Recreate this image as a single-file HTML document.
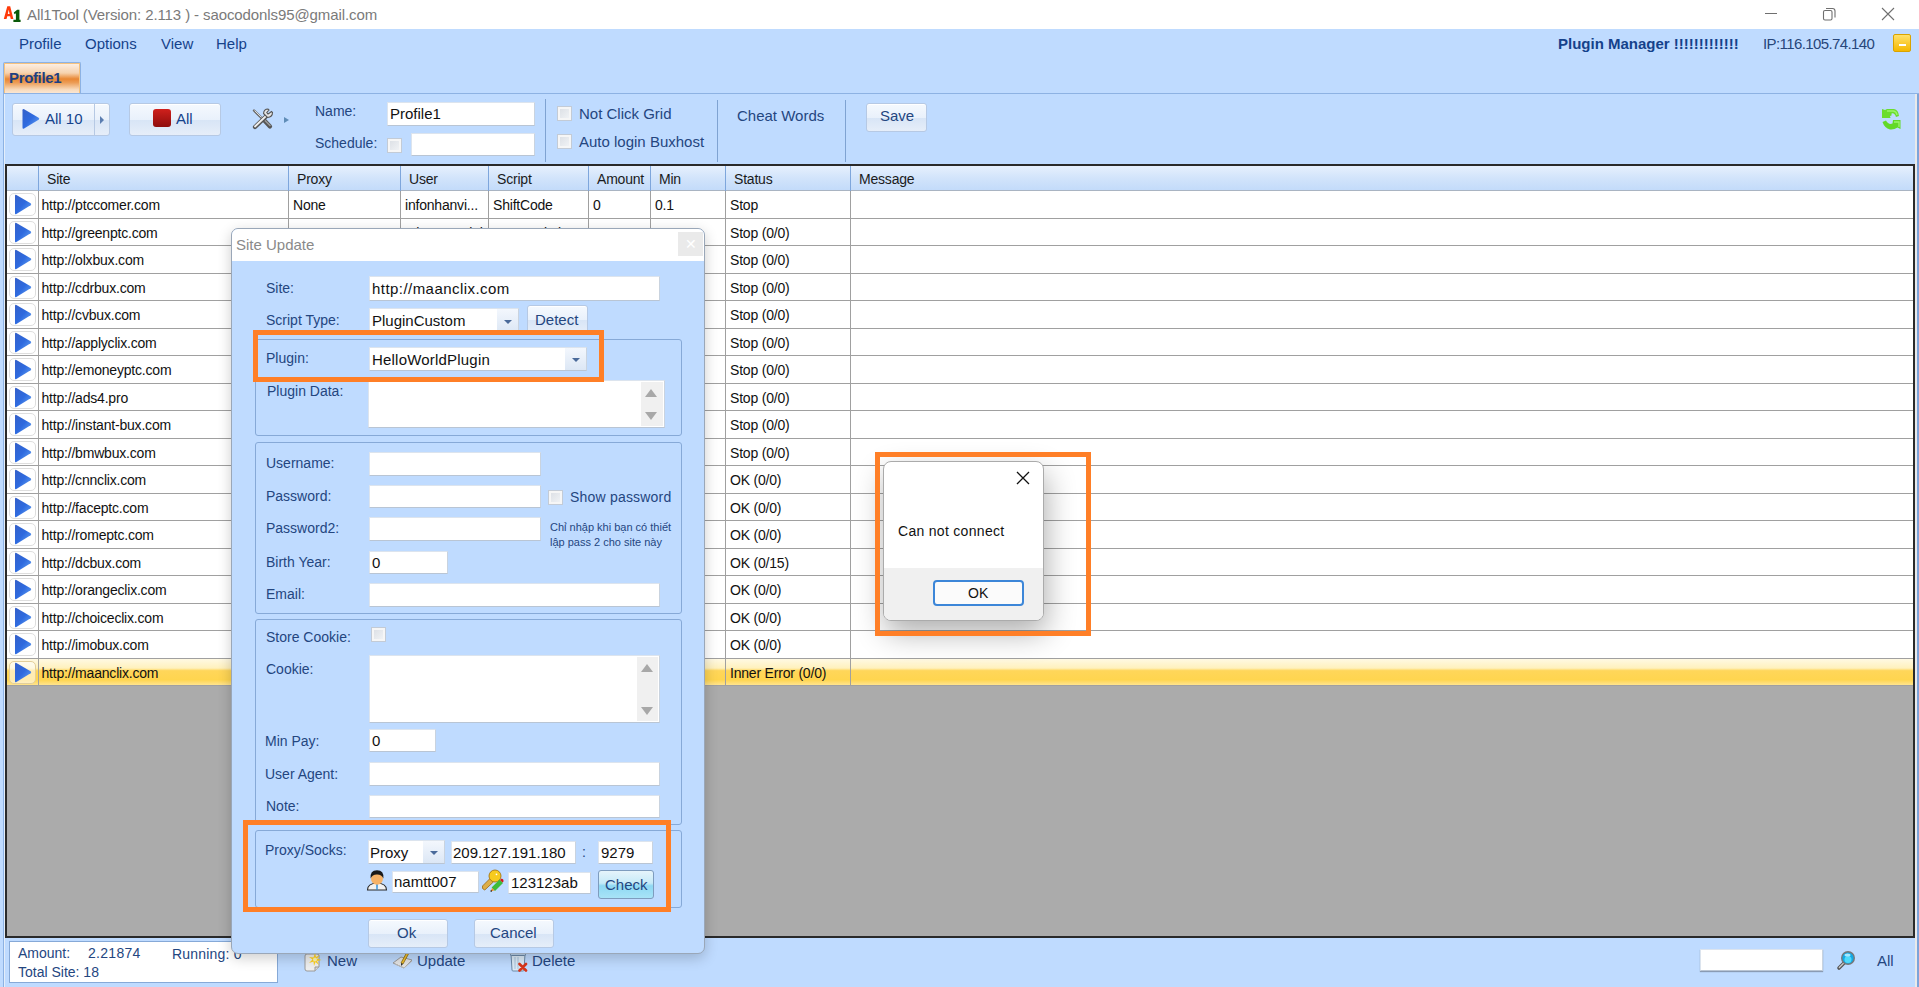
<!DOCTYPE html>
<html><head><meta charset="utf-8">
<style>
*{box-sizing:border-box;margin:0;padding:0}
html,body{width:1919px;height:987px;overflow:hidden;background:#BFDBFF;font-family:"Liberation Sans",sans-serif;position:relative}
.a{position:absolute;white-space:nowrap}
.blue{color:#15428B}
.grid{left:5px;top:164px;width:1910px;height:774px;border:2px solid #2a2a2a;background:#ABABAB;overflow:hidden}
.hdr{position:absolute;left:0;top:0;height:25px;width:100%;background:linear-gradient(#E6F0FD,#D2E4FB 50%,#C3DBFA);border-bottom:1px solid #A9B4C2}
.hc{position:absolute;top:0;height:25px;border-right:1px solid #7EA6DC;font-size:14px;color:#1b1b1b;line-height:26px;padding-left:8px;letter-spacing:-0.2px}
.row{position:absolute;left:0;width:100%;height:27.5px;background:#fff;border-bottom:1px solid #A0A0A0}
.c{position:absolute;top:0;height:100%;border-right:1px solid #A0A0A0;font-size:14px;color:#111;line-height:27px;padding-top:1px;padding-left:4px;overflow:hidden;letter-spacing:-0.2px}
.play{position:absolute;left:2px;top:2px;width:27px;height:23px;border:1px solid #DEDEDE;border-radius:5px;background:#fff}

.sel{background:linear-gradient(#FFF9E3,#FFF1BD 35%,#FFD65A 45%,#FFD54F 80%,#FFE48F)}
.btn{position:absolute;border:1px solid #B6C9E4;border-radius:3px;background:linear-gradient(#F5F9FE,#E9F1FB 50%,#D8E5F6 52%,#E6EEF9);box-shadow:0 1px 0 #fff inset}
.cb{position:absolute;width:15px;height:15px;border:1px solid #C3CBD6;background:linear-gradient(135deg,#D9DDE3,#F4F6F8);box-shadow:inset 0 0 0 2px #f6f6f6}
.tb{position:absolute;background:#fff;border:1px solid #DCE4EE;border-right-color:#C9D3DF;border-bottom-color:#B9C5D4}
.lbl{position:absolute;white-space:nowrap;font-size:14px;color:#24467F}
.txt{position:absolute;white-space:nowrap;font-size:15px;color:#111}
.grp{position:absolute;border:1px solid #86A9D7;border-radius:3px}
.dd{position:absolute;top:0;right:0;width:21px;height:100%;background:linear-gradient(#F3F7FD,#DCE7F5)}
.dd:after{content:"";position:absolute;left:7px;top:50%;margin-top:-1px;border-top:4px solid #4A6A9A;border-left:4px solid transparent;border-right:4px solid transparent}
.sb{position:absolute;background:#F0F0F0}
.up{position:absolute;left:5px;border-bottom:9px solid #A8A8A8;border-left:7px solid transparent;border-right:7px solid transparent}
.dn{position:absolute;left:5px;border-top:9px solid #A8A8A8;border-left:7px solid transparent;border-right:7px solid transparent}
.orange{position:absolute;border:5px solid #FF7F27}
</style></head><body>
<!-- title bar -->
<div class="a" style="left:0;top:0;width:1919px;height:29px;background:#fff"></div>
<svg class="a" style="left:0;top:0" width="24" height="26" viewBox="0 0 24 26"><path fill="#FF3A0A" fill-rule="evenodd" d="M3.8 19 L7.3 6.3 L10.2 6.3 L13.4 19 L10.8 19 L10.1 16.2 L7.3 16.2 L6.5 19 Z M7.8 13.9 L9.6 13.9 L8.7 9.8 Z"/><path fill="#0A5A0A" d="M13.8 12.6 L17.2 9.8 L19.4 9.8 L19.4 19.8 L20.6 19.8 L20.6 22 L13.4 22 L13.4 19.8 L15.9 19.8 L15.9 13.3 L14.6 14.3 Z"/></svg>
<div class="a" style="left:27px;top:6px;font-size:15px;color:#7A7A7A;letter-spacing:-0.1px">All1Tool (Version: 2.113 ) - saocodonls95@gmail.com</div>
<svg class="a" style="left:1760px;top:4px" width="150" height="22" viewBox="0 0 150 22"><path d="M5 9.5 H17" stroke="#6f6f6f" stroke-width="1"/><rect x="63.5" y="6.5" width="8.5" height="9.5" rx="1.5" fill="none" stroke="#6f6f6f" stroke-width="1.1"/><path d="M66 4.5 H72.5 Q75 4.5 75 7 V13.5" fill="none" stroke="#6f6f6f" stroke-width="1.1"/><path d="M122 4 L134 16 M134 4 L122 16" stroke="#6f6f6f" stroke-width="1.1"/></svg>
<!-- menu -->
<div class="a blue" style="left:19px;top:35px;font-size:15px">Profile</div>
<div class="a blue" style="left:85px;top:35px;font-size:15px">Options</div>
<div class="a blue" style="left:161px;top:35px;font-size:15px">View</div>
<div class="a blue" style="left:216px;top:35px;font-size:15px">Help</div>
<div class="a blue" style="left:1558px;top:35px;font-size:15px;font-weight:bold">Plugin Manager !!!!!!!!!!!!!</div>
<div class="a" style="left:1763px;top:35px;font-size:15px;color:#27467A;letter-spacing:-0.6px">IP:116.105.74.140</div>
<div class="a" style="left:1893px;top:34px;width:18px;height:18px;background:linear-gradient(#FFE16B,#F5B800);border:1px solid #D9A300;border-radius:2px"><div class="a" style="left:5px;top:9px;width:7px;height:2px;background:#fff"></div></div>

<!-- tab -->
<div class="a" style="left:3px;top:62px;width:78px;height:32px;border:1px solid #8DB2E3;border-bottom:none;border-radius:2px 2px 0 0"><div class="a" style="left:0;top:0;width:76px;height:31px;border:1px solid #F6C27E;border-bottom:none;background:linear-gradient(#FCEEE2 0%,#F6D2AE 30%,#E98733 50%,#EC9C55 62%,#F8DABB 85%,#FBE9D8 100%)"></div></div>
<div class="a" style="left:9px;top:69px;font-size:15px;font-weight:bold;color:#1E3F80;letter-spacing:-0.35px">Profile1</div>
<div class="a" style="left:3px;top:93px;width:1916px;height:894px;border-top:1px solid #8DB2E3;border-left:1px solid #8DB2E3"></div>
<div class="a" style="left:4px;top:94px;width:1px;height:893px;background:#E4EEFA"></div>
<div class="a" style="left:1915px;top:94px;width:2px;height:893px;background:#EAEAEA"></div>
<div class="a" style="left:1917px;top:94px;width:2px;height:893px;background:#7DA4DA"></div>

<!-- toolbar -->
<div class="btn" style="left:12px;top:103px;width:98px;height:33px"></div>
<div class="a" style="left:94px;top:104px;width:1px;height:31px;background:#B6C9E4"></div>
<svg class="a" style="left:21px;top:108px" width="20" height="22" viewBox="0 0 20 22"><defs><linearGradient id="pg2" x1="0" y1="0" x2="1" y2="1"><stop offset="0" stop-color="#3560C8"/><stop offset="0.5" stop-color="#2E6ADF"/><stop offset="1" stop-color="#6AA8F5"/></linearGradient></defs><path d="M1.5 2.2 Q1.5 0.4 3.1 1.2 L17.6 9.8 Q19 10.8 17.6 11.8 L3.1 20.6 Q1.5 21.4 1.5 19.6 Z" fill="url(#pg2)"/></svg>
<div class="a blue" style="left:45px;top:110px;font-size:15px">All 10</div>
<div class="a" style="left:100px;top:116px;border-left:4px solid #5B7DB0;border-top:4px solid transparent;border-bottom:4px solid transparent"></div>
<div class="btn" style="left:129px;top:103px;width:92px;height:33px"></div>
<div class="a" style="left:153px;top:109px;width:18px;height:18px;border-radius:3px;background:linear-gradient(#D0201C,#8E0D0D)"></div>
<div class="a blue" style="left:176px;top:110px;font-size:15px">All</div>
<svg class="a" style="left:252px;top:108px" width="22" height="22" viewBox="0 0 22 22"><path d="M2 2.5 L10 10.5" stroke="#6a6a6a" stroke-width="2.4" stroke-linecap="round"/><path d="M2.5 2.5 L10 10" stroke="#e8e8e8" stroke-width="0.9"/><path d="M11 11 L18 18.5" stroke="#555" stroke-width="4.2" stroke-linecap="round"/><path d="M11.5 11 L18 17.5" stroke="#9a9a9a" stroke-width="1.6" stroke-linecap="round"/><path d="M14.5 8 L3 19" stroke="#555" stroke-width="4.2" stroke-linecap="round"/><path d="M14 8 L3 18.5" stroke="#eee" stroke-width="1.8" stroke-linecap="round"/><path d="M11.5 5.5 Q12 1 16 1 L17 2 L14.8 4.5 L16 6 L17.5 5 L19.5 3.5 L20.5 4.5 Q20.5 9 15.5 9.5 Z" fill="#e6e6e6" stroke="#555" stroke-width="1.1"/></svg>
<div class="a" style="left:284px;top:117px;border-left:5px solid #5F8DB8;border-top:3.5px solid transparent;border-bottom:3.5px solid transparent"></div>
<div class="lbl" style="left:315px;top:103px">Name:</div>
<div class="tb" style="left:387px;top:102px;width:148px;height:24px"></div>
<div class="txt" style="left:390px;top:105px">Profile1</div>
<div class="lbl" style="left:315px;top:135px">Schedule:</div>
<div class="cb" style="left:387px;top:138px"></div>
<div class="tb" style="left:411px;top:133px;width:124px;height:23px"></div>
<div class="a" style="left:545px;top:99px;width:1px;height:63px;background:#7FA3D2"></div>
<div class="cb" style="left:557px;top:106px"></div>
<div class="lbl" style="left:579px;top:105px;font-size:15px">Not Click Grid</div>
<div class="cb" style="left:557px;top:134px"></div>
<div class="lbl" style="left:579px;top:133px;font-size:15px">Auto login Buxhost</div>
<div class="a" style="left:717px;top:100px;width:1px;height:62px;background:#7FA3D2"></div>
<div class="lbl" style="left:737px;top:107px;font-size:15px">Cheat Words</div>
<div class="a" style="left:845px;top:100px;width:1px;height:62px;background:#7FA3D2"></div>
<div class="btn" style="left:866px;top:103px;width:61px;height:29px"></div>
<div class="lbl" style="left:880px;top:107px;font-size:15px">Save</div>
<svg class="a" style="left:1881px;top:108px" width="21" height="22" viewBox="0 0 21 22"><path d="M1 1 L4 2 L6 1 L13 1 Q17.5 2 18 8 L15 9 Q13.5 4.5 10.5 5.5 L10.5 7.5 L9 8 L9.5 10 L1 10 Z" fill="#6BDD2E"/><path d="M6 3 L12.5 3 Q15.5 3.5 16 7" fill="none" stroke="#9BF56A" stroke-width="1.3"/><path d="M1.5 14 L5 12.5 Q7.5 17 11.5 15.5 L12 12 L19.5 12 L19.5 21 L16.5 19.5 Q13 22 9 21.5 Q3.5 20 1.5 14 Z" fill="#62D926"/><path d="M13 14 L18 14 L18 19" fill="none" stroke="#9BF56A" stroke-width="1.3"/></svg>

<div id="grid" class="a grid"><div class="hdr">
<div class="hc" style="left:0px;width:32px"></div>
<div class="hc" style="left:32px;width:250px">Site</div>
<div class="hc" style="left:282px;width:112px">Proxy</div>
<div class="hc" style="left:394px;width:88px">User</div>
<div class="hc" style="left:482px;width:100px">Script</div>
<div class="hc" style="left:582px;width:62px">Amount</div>
<div class="hc" style="left:644px;width:75px">Min</div>
<div class="hc" style="left:719px;width:125px">Status</div>
<div class="hc" style="left:844px;width:1064px">Message</div>
</div>
<div class="row" style="top:25.0px">
<div class="c" style="left:0;width:32px"><div class="play"><svg style="position:absolute;left:3px;top:0px" width="20" height="21" viewBox="0 0 20 21"><defs><linearGradient id="pg" x1="0" y1="0" x2="1" y2="1"><stop offset="0" stop-color="#3560C8"/><stop offset="0.5" stop-color="#2E6ADF"/><stop offset="1" stop-color="#6AA8F5"/></linearGradient></defs><path d="M2 1.8 Q2 0.3 3.4 1 L17.6 9.2 Q18.9 10.2 17.6 11.2 L3.4 19.9 Q2 20.7 2 19.2 Z" fill="url(#pg)"/></svg></div></div>
<div class="c" style="left:32px;width:250px;padding-left:2.5px;">http://ptccomer.com</div>
<div class="c" style="left:282px;width:112px;">None</div>
<div class="c" style="left:394px;width:88px;">infonhanvi...</div>
<div class="c" style="left:482px;width:100px;">ShiftCode</div>
<div class="c" style="left:582px;width:62px;">0</div>
<div class="c" style="left:644px;width:75px;">0.1</div>
<div class="c" style="left:719px;width:125px;">Stop</div>
<div class="c" style="left:844px;width:1064px;border-right:none"></div>
</div>
<div class="row" style="top:52.5px">
<div class="c" style="left:0;width:32px"><div class="play"><svg style="position:absolute;left:3px;top:0px" width="20" height="21" viewBox="0 0 20 21"><defs><linearGradient id="pg" x1="0" y1="0" x2="1" y2="1"><stop offset="0" stop-color="#3560C8"/><stop offset="0.5" stop-color="#2E6ADF"/><stop offset="1" stop-color="#6AA8F5"/></linearGradient></defs><path d="M2 1.8 Q2 0.3 3.4 1 L17.6 9.2 Q18.9 10.2 17.6 11.2 L3.4 19.9 Q2 20.7 2 19.2 Z" fill="url(#pg)"/></svg></div></div>
<div class="c" style="left:32px;width:250px;padding-left:2.5px;">http://greenptc.com</div>
<div class="c" style="left:282px;width:112px;">None</div>
<div class="c" style="left:394px;width:88px;">tuhaoyeutrinh</div>
<div class="c" style="left:482px;width:100px;">PTCEvolution</div>
<div class="c" style="left:582px;width:62px;">2.409</div>
<div class="c" style="left:644px;width:75px;">1</div>
<div class="c" style="left:719px;width:125px;">Stop (0/0)</div>
<div class="c" style="left:844px;width:1064px;border-right:none"></div>
</div>
<div class="row" style="top:80.0px">
<div class="c" style="left:0;width:32px"><div class="play"><svg style="position:absolute;left:3px;top:0px" width="20" height="21" viewBox="0 0 20 21"><defs><linearGradient id="pg" x1="0" y1="0" x2="1" y2="1"><stop offset="0" stop-color="#3560C8"/><stop offset="0.5" stop-color="#2E6ADF"/><stop offset="1" stop-color="#6AA8F5"/></linearGradient></defs><path d="M2 1.8 Q2 0.3 3.4 1 L17.6 9.2 Q18.9 10.2 17.6 11.2 L3.4 19.9 Q2 20.7 2 19.2 Z" fill="url(#pg)"/></svg></div></div>
<div class="c" style="left:32px;width:250px;padding-left:2.5px;">http://olxbux.com</div>
<div class="c" style="left:282px;width:112px;"></div>
<div class="c" style="left:394px;width:88px;"></div>
<div class="c" style="left:482px;width:100px;"></div>
<div class="c" style="left:582px;width:62px;"></div>
<div class="c" style="left:644px;width:75px;"></div>
<div class="c" style="left:719px;width:125px;">Stop (0/0)</div>
<div class="c" style="left:844px;width:1064px;border-right:none"></div>
</div>
<div class="row" style="top:107.5px">
<div class="c" style="left:0;width:32px"><div class="play"><svg style="position:absolute;left:3px;top:0px" width="20" height="21" viewBox="0 0 20 21"><defs><linearGradient id="pg" x1="0" y1="0" x2="1" y2="1"><stop offset="0" stop-color="#3560C8"/><stop offset="0.5" stop-color="#2E6ADF"/><stop offset="1" stop-color="#6AA8F5"/></linearGradient></defs><path d="M2 1.8 Q2 0.3 3.4 1 L17.6 9.2 Q18.9 10.2 17.6 11.2 L3.4 19.9 Q2 20.7 2 19.2 Z" fill="url(#pg)"/></svg></div></div>
<div class="c" style="left:32px;width:250px;padding-left:2.5px;">http://cdrbux.com</div>
<div class="c" style="left:282px;width:112px;"></div>
<div class="c" style="left:394px;width:88px;"></div>
<div class="c" style="left:482px;width:100px;"></div>
<div class="c" style="left:582px;width:62px;"></div>
<div class="c" style="left:644px;width:75px;"></div>
<div class="c" style="left:719px;width:125px;">Stop (0/0)</div>
<div class="c" style="left:844px;width:1064px;border-right:none"></div>
</div>
<div class="row" style="top:135.0px">
<div class="c" style="left:0;width:32px"><div class="play"><svg style="position:absolute;left:3px;top:0px" width="20" height="21" viewBox="0 0 20 21"><defs><linearGradient id="pg" x1="0" y1="0" x2="1" y2="1"><stop offset="0" stop-color="#3560C8"/><stop offset="0.5" stop-color="#2E6ADF"/><stop offset="1" stop-color="#6AA8F5"/></linearGradient></defs><path d="M2 1.8 Q2 0.3 3.4 1 L17.6 9.2 Q18.9 10.2 17.6 11.2 L3.4 19.9 Q2 20.7 2 19.2 Z" fill="url(#pg)"/></svg></div></div>
<div class="c" style="left:32px;width:250px;padding-left:2.5px;">http://cvbux.com</div>
<div class="c" style="left:282px;width:112px;"></div>
<div class="c" style="left:394px;width:88px;"></div>
<div class="c" style="left:482px;width:100px;"></div>
<div class="c" style="left:582px;width:62px;"></div>
<div class="c" style="left:644px;width:75px;"></div>
<div class="c" style="left:719px;width:125px;">Stop (0/0)</div>
<div class="c" style="left:844px;width:1064px;border-right:none"></div>
</div>
<div class="row" style="top:162.5px">
<div class="c" style="left:0;width:32px"><div class="play"><svg style="position:absolute;left:3px;top:0px" width="20" height="21" viewBox="0 0 20 21"><defs><linearGradient id="pg" x1="0" y1="0" x2="1" y2="1"><stop offset="0" stop-color="#3560C8"/><stop offset="0.5" stop-color="#2E6ADF"/><stop offset="1" stop-color="#6AA8F5"/></linearGradient></defs><path d="M2 1.8 Q2 0.3 3.4 1 L17.6 9.2 Q18.9 10.2 17.6 11.2 L3.4 19.9 Q2 20.7 2 19.2 Z" fill="url(#pg)"/></svg></div></div>
<div class="c" style="left:32px;width:250px;padding-left:2.5px;">http://applyclix.com</div>
<div class="c" style="left:282px;width:112px;"></div>
<div class="c" style="left:394px;width:88px;"></div>
<div class="c" style="left:482px;width:100px;"></div>
<div class="c" style="left:582px;width:62px;"></div>
<div class="c" style="left:644px;width:75px;"></div>
<div class="c" style="left:719px;width:125px;">Stop (0/0)</div>
<div class="c" style="left:844px;width:1064px;border-right:none"></div>
</div>
<div class="row" style="top:190.0px">
<div class="c" style="left:0;width:32px"><div class="play"><svg style="position:absolute;left:3px;top:0px" width="20" height="21" viewBox="0 0 20 21"><defs><linearGradient id="pg" x1="0" y1="0" x2="1" y2="1"><stop offset="0" stop-color="#3560C8"/><stop offset="0.5" stop-color="#2E6ADF"/><stop offset="1" stop-color="#6AA8F5"/></linearGradient></defs><path d="M2 1.8 Q2 0.3 3.4 1 L17.6 9.2 Q18.9 10.2 17.6 11.2 L3.4 19.9 Q2 20.7 2 19.2 Z" fill="url(#pg)"/></svg></div></div>
<div class="c" style="left:32px;width:250px;padding-left:2.5px;">http://emoneyptc.com</div>
<div class="c" style="left:282px;width:112px;"></div>
<div class="c" style="left:394px;width:88px;"></div>
<div class="c" style="left:482px;width:100px;"></div>
<div class="c" style="left:582px;width:62px;"></div>
<div class="c" style="left:644px;width:75px;"></div>
<div class="c" style="left:719px;width:125px;">Stop (0/0)</div>
<div class="c" style="left:844px;width:1064px;border-right:none"></div>
</div>
<div class="row" style="top:217.5px">
<div class="c" style="left:0;width:32px"><div class="play"><svg style="position:absolute;left:3px;top:0px" width="20" height="21" viewBox="0 0 20 21"><defs><linearGradient id="pg" x1="0" y1="0" x2="1" y2="1"><stop offset="0" stop-color="#3560C8"/><stop offset="0.5" stop-color="#2E6ADF"/><stop offset="1" stop-color="#6AA8F5"/></linearGradient></defs><path d="M2 1.8 Q2 0.3 3.4 1 L17.6 9.2 Q18.9 10.2 17.6 11.2 L3.4 19.9 Q2 20.7 2 19.2 Z" fill="url(#pg)"/></svg></div></div>
<div class="c" style="left:32px;width:250px;padding-left:2.5px;">http://ads4.pro</div>
<div class="c" style="left:282px;width:112px;"></div>
<div class="c" style="left:394px;width:88px;"></div>
<div class="c" style="left:482px;width:100px;"></div>
<div class="c" style="left:582px;width:62px;"></div>
<div class="c" style="left:644px;width:75px;"></div>
<div class="c" style="left:719px;width:125px;">Stop (0/0)</div>
<div class="c" style="left:844px;width:1064px;border-right:none"></div>
</div>
<div class="row" style="top:245.0px">
<div class="c" style="left:0;width:32px"><div class="play"><svg style="position:absolute;left:3px;top:0px" width="20" height="21" viewBox="0 0 20 21"><defs><linearGradient id="pg" x1="0" y1="0" x2="1" y2="1"><stop offset="0" stop-color="#3560C8"/><stop offset="0.5" stop-color="#2E6ADF"/><stop offset="1" stop-color="#6AA8F5"/></linearGradient></defs><path d="M2 1.8 Q2 0.3 3.4 1 L17.6 9.2 Q18.9 10.2 17.6 11.2 L3.4 19.9 Q2 20.7 2 19.2 Z" fill="url(#pg)"/></svg></div></div>
<div class="c" style="left:32px;width:250px;padding-left:2.5px;">http://instant-bux.com</div>
<div class="c" style="left:282px;width:112px;"></div>
<div class="c" style="left:394px;width:88px;"></div>
<div class="c" style="left:482px;width:100px;"></div>
<div class="c" style="left:582px;width:62px;"></div>
<div class="c" style="left:644px;width:75px;"></div>
<div class="c" style="left:719px;width:125px;">Stop (0/0)</div>
<div class="c" style="left:844px;width:1064px;border-right:none"></div>
</div>
<div class="row" style="top:272.5px">
<div class="c" style="left:0;width:32px"><div class="play"><svg style="position:absolute;left:3px;top:0px" width="20" height="21" viewBox="0 0 20 21"><defs><linearGradient id="pg" x1="0" y1="0" x2="1" y2="1"><stop offset="0" stop-color="#3560C8"/><stop offset="0.5" stop-color="#2E6ADF"/><stop offset="1" stop-color="#6AA8F5"/></linearGradient></defs><path d="M2 1.8 Q2 0.3 3.4 1 L17.6 9.2 Q18.9 10.2 17.6 11.2 L3.4 19.9 Q2 20.7 2 19.2 Z" fill="url(#pg)"/></svg></div></div>
<div class="c" style="left:32px;width:250px;padding-left:2.5px;">http://bmwbux.com</div>
<div class="c" style="left:282px;width:112px;"></div>
<div class="c" style="left:394px;width:88px;"></div>
<div class="c" style="left:482px;width:100px;"></div>
<div class="c" style="left:582px;width:62px;"></div>
<div class="c" style="left:644px;width:75px;"></div>
<div class="c" style="left:719px;width:125px;">Stop (0/0)</div>
<div class="c" style="left:844px;width:1064px;border-right:none"></div>
</div>
<div class="row" style="top:300.0px">
<div class="c" style="left:0;width:32px"><div class="play"><svg style="position:absolute;left:3px;top:0px" width="20" height="21" viewBox="0 0 20 21"><defs><linearGradient id="pg" x1="0" y1="0" x2="1" y2="1"><stop offset="0" stop-color="#3560C8"/><stop offset="0.5" stop-color="#2E6ADF"/><stop offset="1" stop-color="#6AA8F5"/></linearGradient></defs><path d="M2 1.8 Q2 0.3 3.4 1 L17.6 9.2 Q18.9 10.2 17.6 11.2 L3.4 19.9 Q2 20.7 2 19.2 Z" fill="url(#pg)"/></svg></div></div>
<div class="c" style="left:32px;width:250px;padding-left:2.5px;">http://cnnclix.com</div>
<div class="c" style="left:282px;width:112px;"></div>
<div class="c" style="left:394px;width:88px;"></div>
<div class="c" style="left:482px;width:100px;"></div>
<div class="c" style="left:582px;width:62px;"></div>
<div class="c" style="left:644px;width:75px;"></div>
<div class="c" style="left:719px;width:125px;">OK (0/0)</div>
<div class="c" style="left:844px;width:1064px;border-right:none"></div>
</div>
<div class="row" style="top:327.5px">
<div class="c" style="left:0;width:32px"><div class="play"><svg style="position:absolute;left:3px;top:0px" width="20" height="21" viewBox="0 0 20 21"><defs><linearGradient id="pg" x1="0" y1="0" x2="1" y2="1"><stop offset="0" stop-color="#3560C8"/><stop offset="0.5" stop-color="#2E6ADF"/><stop offset="1" stop-color="#6AA8F5"/></linearGradient></defs><path d="M2 1.8 Q2 0.3 3.4 1 L17.6 9.2 Q18.9 10.2 17.6 11.2 L3.4 19.9 Q2 20.7 2 19.2 Z" fill="url(#pg)"/></svg></div></div>
<div class="c" style="left:32px;width:250px;padding-left:2.5px;">http://faceptc.com</div>
<div class="c" style="left:282px;width:112px;"></div>
<div class="c" style="left:394px;width:88px;"></div>
<div class="c" style="left:482px;width:100px;"></div>
<div class="c" style="left:582px;width:62px;"></div>
<div class="c" style="left:644px;width:75px;"></div>
<div class="c" style="left:719px;width:125px;">OK (0/0)</div>
<div class="c" style="left:844px;width:1064px;border-right:none"></div>
</div>
<div class="row" style="top:355.0px">
<div class="c" style="left:0;width:32px"><div class="play"><svg style="position:absolute;left:3px;top:0px" width="20" height="21" viewBox="0 0 20 21"><defs><linearGradient id="pg" x1="0" y1="0" x2="1" y2="1"><stop offset="0" stop-color="#3560C8"/><stop offset="0.5" stop-color="#2E6ADF"/><stop offset="1" stop-color="#6AA8F5"/></linearGradient></defs><path d="M2 1.8 Q2 0.3 3.4 1 L17.6 9.2 Q18.9 10.2 17.6 11.2 L3.4 19.9 Q2 20.7 2 19.2 Z" fill="url(#pg)"/></svg></div></div>
<div class="c" style="left:32px;width:250px;padding-left:2.5px;">http://romeptc.com</div>
<div class="c" style="left:282px;width:112px;"></div>
<div class="c" style="left:394px;width:88px;"></div>
<div class="c" style="left:482px;width:100px;"></div>
<div class="c" style="left:582px;width:62px;"></div>
<div class="c" style="left:644px;width:75px;"></div>
<div class="c" style="left:719px;width:125px;">OK (0/0)</div>
<div class="c" style="left:844px;width:1064px;border-right:none"></div>
</div>
<div class="row" style="top:382.5px">
<div class="c" style="left:0;width:32px"><div class="play"><svg style="position:absolute;left:3px;top:0px" width="20" height="21" viewBox="0 0 20 21"><defs><linearGradient id="pg" x1="0" y1="0" x2="1" y2="1"><stop offset="0" stop-color="#3560C8"/><stop offset="0.5" stop-color="#2E6ADF"/><stop offset="1" stop-color="#6AA8F5"/></linearGradient></defs><path d="M2 1.8 Q2 0.3 3.4 1 L17.6 9.2 Q18.9 10.2 17.6 11.2 L3.4 19.9 Q2 20.7 2 19.2 Z" fill="url(#pg)"/></svg></div></div>
<div class="c" style="left:32px;width:250px;padding-left:2.5px;">http://dcbux.com</div>
<div class="c" style="left:282px;width:112px;"></div>
<div class="c" style="left:394px;width:88px;"></div>
<div class="c" style="left:482px;width:100px;"></div>
<div class="c" style="left:582px;width:62px;"></div>
<div class="c" style="left:644px;width:75px;"></div>
<div class="c" style="left:719px;width:125px;">OK (0/15)</div>
<div class="c" style="left:844px;width:1064px;border-right:none"></div>
</div>
<div class="row" style="top:410.0px">
<div class="c" style="left:0;width:32px"><div class="play"><svg style="position:absolute;left:3px;top:0px" width="20" height="21" viewBox="0 0 20 21"><defs><linearGradient id="pg" x1="0" y1="0" x2="1" y2="1"><stop offset="0" stop-color="#3560C8"/><stop offset="0.5" stop-color="#2E6ADF"/><stop offset="1" stop-color="#6AA8F5"/></linearGradient></defs><path d="M2 1.8 Q2 0.3 3.4 1 L17.6 9.2 Q18.9 10.2 17.6 11.2 L3.4 19.9 Q2 20.7 2 19.2 Z" fill="url(#pg)"/></svg></div></div>
<div class="c" style="left:32px;width:250px;padding-left:2.5px;">http://orangeclix.com</div>
<div class="c" style="left:282px;width:112px;"></div>
<div class="c" style="left:394px;width:88px;"></div>
<div class="c" style="left:482px;width:100px;"></div>
<div class="c" style="left:582px;width:62px;"></div>
<div class="c" style="left:644px;width:75px;"></div>
<div class="c" style="left:719px;width:125px;">OK (0/0)</div>
<div class="c" style="left:844px;width:1064px;border-right:none"></div>
</div>
<div class="row" style="top:437.5px">
<div class="c" style="left:0;width:32px"><div class="play"><svg style="position:absolute;left:3px;top:0px" width="20" height="21" viewBox="0 0 20 21"><defs><linearGradient id="pg" x1="0" y1="0" x2="1" y2="1"><stop offset="0" stop-color="#3560C8"/><stop offset="0.5" stop-color="#2E6ADF"/><stop offset="1" stop-color="#6AA8F5"/></linearGradient></defs><path d="M2 1.8 Q2 0.3 3.4 1 L17.6 9.2 Q18.9 10.2 17.6 11.2 L3.4 19.9 Q2 20.7 2 19.2 Z" fill="url(#pg)"/></svg></div></div>
<div class="c" style="left:32px;width:250px;padding-left:2.5px;">http://choiceclix.com</div>
<div class="c" style="left:282px;width:112px;"></div>
<div class="c" style="left:394px;width:88px;"></div>
<div class="c" style="left:482px;width:100px;"></div>
<div class="c" style="left:582px;width:62px;"></div>
<div class="c" style="left:644px;width:75px;"></div>
<div class="c" style="left:719px;width:125px;">OK (0/0)</div>
<div class="c" style="left:844px;width:1064px;border-right:none"></div>
</div>
<div class="row" style="top:465.0px">
<div class="c" style="left:0;width:32px"><div class="play"><svg style="position:absolute;left:3px;top:0px" width="20" height="21" viewBox="0 0 20 21"><defs><linearGradient id="pg" x1="0" y1="0" x2="1" y2="1"><stop offset="0" stop-color="#3560C8"/><stop offset="0.5" stop-color="#2E6ADF"/><stop offset="1" stop-color="#6AA8F5"/></linearGradient></defs><path d="M2 1.8 Q2 0.3 3.4 1 L17.6 9.2 Q18.9 10.2 17.6 11.2 L3.4 19.9 Q2 20.7 2 19.2 Z" fill="url(#pg)"/></svg></div></div>
<div class="c" style="left:32px;width:250px;padding-left:2.5px;">http://imobux.com</div>
<div class="c" style="left:282px;width:112px;"></div>
<div class="c" style="left:394px;width:88px;"></div>
<div class="c" style="left:482px;width:100px;"></div>
<div class="c" style="left:582px;width:62px;"></div>
<div class="c" style="left:644px;width:75px;"></div>
<div class="c" style="left:719px;width:125px;">OK (0/0)</div>
<div class="c" style="left:844px;width:1064px;border-right:none"></div>
</div>
<div class="row sel" style="top:492.5px">
<div class="c" style="left:0;width:32px"><div class="play" style="background:rgba(255,255,255,0.55);border-color:#E3CF9A"><svg style="position:absolute;left:3px;top:0px" width="20" height="21" viewBox="0 0 20 21"><defs><linearGradient id="pg" x1="0" y1="0" x2="1" y2="1"><stop offset="0" stop-color="#3560C8"/><stop offset="0.5" stop-color="#2E6ADF"/><stop offset="1" stop-color="#6AA8F5"/></linearGradient></defs><path d="M2 1.8 Q2 0.3 3.4 1 L17.6 9.2 Q18.9 10.2 17.6 11.2 L3.4 19.9 Q2 20.7 2 19.2 Z" fill="url(#pg)"/></svg></div></div>
<div class="c" style="left:32px;width:250px;padding-left:2.5px;">http://maanclix.com</div>
<div class="c" style="left:282px;width:112px;"></div>
<div class="c" style="left:394px;width:88px;"></div>
<div class="c" style="left:482px;width:100px;"></div>
<div class="c" style="left:582px;width:62px;"></div>
<div class="c" style="left:644px;width:75px;"></div>
<div class="c" style="left:719px;width:125px;">Inner Error (0/0)</div>
<div class="c" style="left:844px;width:1064px;border-right:none"></div>
</div></div>

<!-- status bar -->
<div class="a" style="left:9px;top:941px;width:269px;height:42px;background:#fff;border:1px solid #86A9D7"></div>
<div class="lbl" style="left:18px;top:945px">Amount:</div>
<div class="lbl" style="left:88px;top:945px;letter-spacing:0.3px">2.21874</div>
<div class="lbl" style="left:172px;top:946px;letter-spacing:0.2px">Running: 0</div>
<div class="lbl" style="left:18px;top:964px">Total Site: 18</div>
<svg class="a" style="left:303px;top:952px" width="20" height="20" viewBox="0 0 20 20"><path d="M2 4 Q2 2 4 2 L14 2 Q16 2 16 4 L16 15 L12 19 L4 19 Q2 19 2 17 Z" fill="#EFEFEF" stroke="#9a9a9a" stroke-width="1"/><path d="M16 15 L12 15 L12 19" fill="#d8d8d8" stroke="#9a9a9a" stroke-width="1"/><path d="M12 1 L13 5 L17 3 L14 6.5 L18.5 8 L14 9 L16 13 L12.5 10 L11 14 L10.5 9.5 L6 11 L9.5 7.5 L6 5 L10.5 5.5 Z" fill="#FFD21F"/><circle cx="12" cy="7.5" r="2" fill="#FFF6B0"/></svg>
<div class="lbl" style="left:327px;top:952px;font-size:15px">New</div>
<svg class="a" style="left:392px;top:951px" width="22" height="20" viewBox="0 0 22 20"><path d="M1 12 L9 6 L20 9 L12 17 Z" fill="#E4E4E4" stroke="#9a9a9a" stroke-width="1"/><path d="M3 13 L12 17 L20 10" fill="none" stroke="#bbb" stroke-width="1"/><path d="M9 12 L15 1 L17 2 L11 13 Z" fill="#F2C12E" stroke="#8A6A10" stroke-width="0.8"/><path d="M9 12 L11 13 L9 15 Z" fill="#333"/></svg>
<div class="lbl" style="left:417px;top:952px;font-size:15px">Update</div>
<svg class="a" style="left:509px;top:951px" width="20" height="21" viewBox="0 0 20 21"><path d="M2 3 L16 3 L15 19 Q15 20 14 20 L4 20 Q3 20 3 19 Z" fill="#DCEBF7" stroke="#6C8AA8" stroke-width="1"/><rect x="1.5" y="1.5" width="15" height="3" rx="1" fill="#B9D2EA" stroke="#6C8AA8" stroke-width="1"/><path d="M6 6 V18 M9 6 V18" stroke="#A8C4DE" stroke-width="1"/><path d="M10.5 13 L17 19.5 M17 13 L10.5 19.5" stroke="#D9361A" stroke-width="2.6" stroke-linecap="round"/></svg>
<div class="lbl" style="left:532px;top:952px;font-size:15px">Delete</div>
<div class="tb" style="left:1700px;top:949px;width:123px;height:22px;box-shadow:0 1px 1px #8A9BB3"></div>
<svg class="a" style="left:1836px;top:949px" width="22" height="22" viewBox="0 0 22 22"><path d="M3 19 L8 14" stroke="#555" stroke-width="3.6" stroke-linecap="round"/><path d="M3.3 18.5 L8 13.8" stroke="#ccc" stroke-width="1.3" stroke-linecap="round"/><circle cx="12" cy="9" r="7" fill="#777"/><circle cx="12" cy="9" r="5.6" fill="#12A8E6"/><circle cx="12" cy="10.5" r="3.5" fill="#5FE6FF" opacity="0.8"/><ellipse cx="11.5" cy="6" rx="3" ry="1.6" fill="#B8EEFF" opacity="0.9"/></svg>
<div class="lbl" style="left:1877px;top:952px;font-size:15px">All</div>

<div class="a" style="left:231px;top:228px;width:474px;height:726px;border:1px solid #9AA7B8;border-radius:7px;overflow:hidden;background:#BFDBFF;box-shadow:0 4px 14px rgba(0,0,0,0.2)">
 <div class="a" style="left:0;top:0;width:100%;height:32px;background:#fff"></div>
</div>
<div class="a" style="left:236px;top:236px;font-size:15px;color:#8A8A8A">Site Update</div>
<div class="a" style="left:678px;top:232px;width:25px;height:24px;background:#EAEAEA;color:#fff;font-size:14px;text-align:center;line-height:24px">✕</div>
<!-- site -->
<div class="lbl" style="left:266px;top:280px">Site:</div>
<div class="tb" style="left:369px;top:276px;width:291px;height:25px"></div>
<div class="txt" style="left:372px;top:280px;letter-spacing:0.45px">http://maanclix.com</div>
<div class="lbl" style="left:266px;top:312px">Script Type:</div>
<div class="tb" style="left:369px;top:308px;width:150px;height:25px"><div class="dd"></div></div>
<div class="txt" style="left:372px;top:312px">PluginCustom</div>
<div class="btn" style="left:527px;top:305px;width:61px;height:29px"></div>
<div class="lbl" style="left:535px;top:311px;font-size:15px">Detect</div>
<!-- group1 -->
<div class="grp" style="left:255px;top:339px;width:427px;height:97px"></div>
<div class="lbl" style="left:266px;top:350px">Plugin:</div>
<div class="tb" style="left:369px;top:347px;width:218px;height:24px"><div class="dd"></div></div>
<div class="txt" style="left:372px;top:351px;letter-spacing:0.2px">HelloWorldPlugin</div>
<div class="lbl" style="left:267px;top:383px">Plugin Data:</div>
<div class="tb" style="left:368px;top:380px;width:297px;height:48px"><div class="sb" style="left:272px;top:1px;width:22px;height:44px"><div class="up" style="top:7px;left:4px;border-bottom-width:8px;border-left-width:6px;border-right-width:6px"></div><div class="dn" style="top:30px;left:4px;border-top-width:8px;border-left-width:6px;border-right-width:6px"></div></div></div>
<div class="orange" style="left:253px;top:330px;width:351px;height:52px"></div>
<!-- group2 -->
<div class="grp" style="left:255px;top:442px;width:427px;height:172px"></div>
<div class="lbl" style="left:266px;top:455px">Username:</div>
<div class="tb" style="left:369px;top:452px;width:172px;height:24px"></div>
<div class="lbl" style="left:266px;top:488px">Password:</div>
<div class="tb" style="left:369px;top:485px;width:172px;height:23px"></div>
<div class="cb" style="left:548px;top:490px"></div>
<div class="lbl" style="left:570px;top:489px;letter-spacing:0.2px">Show password</div>
<div class="lbl" style="left:266px;top:520px">Password2:</div>
<div class="tb" style="left:369px;top:517px;width:172px;height:24px"></div>
<div class="lbl" style="left:550px;top:521px;font-size:11px">Chỉ nhập khi bạn có thiết</div>
<div class="lbl" style="left:550px;top:536px;font-size:11px">lập pass 2 cho site này</div>
<div class="lbl" style="left:266px;top:554px">Birth Year:</div>
<div class="tb" style="left:369px;top:551px;width:79px;height:23px"></div>
<div class="txt" style="left:372px;top:554px">0</div>
<div class="lbl" style="left:266px;top:586px">Email:</div>
<div class="tb" style="left:369px;top:583px;width:291px;height:24px"></div>
<!-- group3 -->
<div class="grp" style="left:255px;top:619px;width:427px;height:206px"></div>
<div class="lbl" style="left:266px;top:629px">Store Cookie:</div>
<div class="cb" style="left:371px;top:627px"></div>
<div class="lbl" style="left:266px;top:661px">Cookie:</div>
<div class="tb" style="left:369px;top:655px;width:291px;height:68px"><div class="sb" style="left:267px;top:1px;width:21px;height:64px"><div class="up" style="top:7px;left:4px;border-bottom-width:8px;border-left-width:6px;border-right-width:6px"></div><div class="dn" style="top:50px;left:4px;border-top-width:8px;border-left-width:6px;border-right-width:6px"></div></div></div>
<div class="lbl" style="left:265px;top:733px">Min Pay:</div>
<div class="tb" style="left:369px;top:729px;width:67px;height:23px"></div>
<div class="txt" style="left:372px;top:732px">0</div>
<div class="lbl" style="left:265px;top:766px">User Agent:</div>
<div class="tb" style="left:369px;top:762px;width:291px;height:24px"></div>
<div class="lbl" style="left:266px;top:798px">Note:</div>
<div class="tb" style="left:369px;top:795px;width:291px;height:23px"></div>
<!-- group4 -->
<div class="grp" style="left:255px;top:830px;width:427px;height:78px"></div>
<div class="lbl" style="left:265px;top:842px">Proxy/Socks:</div>
<div class="tb" style="left:368px;top:840px;width:77px;height:24px"><div class="dd"></div></div>
<div class="txt" style="left:370px;top:844px">Proxy</div>
<div class="tb" style="left:451px;top:841px;width:125px;height:23px"></div>
<div class="txt" style="left:453px;top:844px">209.127.191.180</div>
<div class="lbl" style="left:582px;top:844px">:</div>
<div class="tb" style="left:598px;top:841px;width:55px;height:23px"></div>
<div class="txt" style="left:601px;top:844px">9279</div>
<svg class="a" style="left:366px;top:869px" width="22" height="22" viewBox="0 0 22 22"><path d="M1.5 21 Q1.5 14.5 11 14 Q20.5 14.5 20.5 21 Z" fill="#F2F2F2" stroke="#2a2a2a" stroke-width="1.1"/><path d="M10.2 15 L11.8 15 L11.6 21 L10.4 21 Z" fill="#2A8AD8"/><ellipse cx="11" cy="9.6" rx="6" ry="6.2" fill="#F6B267"/><path d="M4.6 9.5 Q3.8 1.2 11 1.2 Q18.2 1.2 17.4 9.5 Q15.5 5.2 11 5.4 Q6.5 5.2 4.6 9.5 Z" fill="#1a1a1a"/></svg>
<div class="tb" style="left:392px;top:871px;width:87px;height:22px"></div>
<div class="txt" style="left:394px;top:873px">namtt007</div>
<svg class="a" style="left:476px;top:864px" width="32" height="32" viewBox="0 0 32 32"><path d="M14.5 14 L6.5 22 Q5.5 25 8.8 26 L17 18.3 Z" fill="#DDAE48" stroke="#9A6A14" stroke-width="0.8"/><circle cx="19" cy="12" r="6" fill="#F7CB1E" stroke="#A87512" stroke-width="0.9"/><circle cx="20.5" cy="10.3" r="0.9" fill="#fff"/><path d="M15.6 23.6 L23.6 15.6 L27 19 L19 27 Z" fill="#3DBB3A"/><path d="M24 16 L25.2 14.8 Q26.4 14.4 27.2 15.4 L27.6 17.3 L26.5 18.5 Z" fill="#D41A1A"/><path d="M16 24 L18.5 26.3 L14.8 27.4 Z" fill="#F08A20"/><circle cx="15.2" cy="27" r="0.8" fill="#111"/></svg>
<div class="tb" style="left:508px;top:872px;width:83px;height:22px"></div>
<div class="txt" style="left:511px;top:874px">123123ab</div>
<div class="a" style="left:598px;top:870px;width:56px;height:29px;border:1px solid #7E9CBE;border-radius:3px;background:linear-gradient(#E6F4FB,#C6EAF8 45%,#8ED8F3 55%,#A8E3F7)"></div>
<div class="lbl" style="left:605px;top:876px;font-size:15px">Check</div>
<div class="orange" style="left:243px;top:820px;width:428px;height:92px"></div>
<div class="btn" style="left:368px;top:919px;width:80px;height:29px"></div>
<div class="lbl" style="left:397px;top:924px;font-size:15px">Ok</div>
<div class="btn" style="left:474px;top:919px;width:80px;height:29px"></div>
<div class="lbl" style="left:490px;top:924px;font-size:15px">Cancel</div>

<div class="a" style="left:883px;top:461px;width:161px;height:160px;border:1px solid #ABABAB;border-radius:8px;overflow:hidden;background:#fff;box-shadow:2px 12px 30px rgba(0,0,0,0.32)">
 <div class="a" style="left:0;top:106px;width:100%;height:60px;background:#F0F0F0"></div>
</div>
<svg class="a" style="left:1016px;top:471px" width="14" height="14" viewBox="0 0 14 14"><path d="M1 1 L13 13 M13 1 L1 13" stroke="#111" stroke-width="1.3"/></svg>
<div class="a" style="left:898px;top:523px;font-size:14px;color:#111;letter-spacing:0.3px">Can not connect</div>
<div class="a" style="left:933px;top:580px;width:91px;height:26px;border:2px solid #3C86D8;border-radius:4px;background:#FBFBFB"></div>
<div class="a" style="left:968px;top:585px;font-size:14px;color:#111">OK</div>
<div class="orange" style="left:875px;top:452px;width:216px;height:184px"></div>

</body></html>
